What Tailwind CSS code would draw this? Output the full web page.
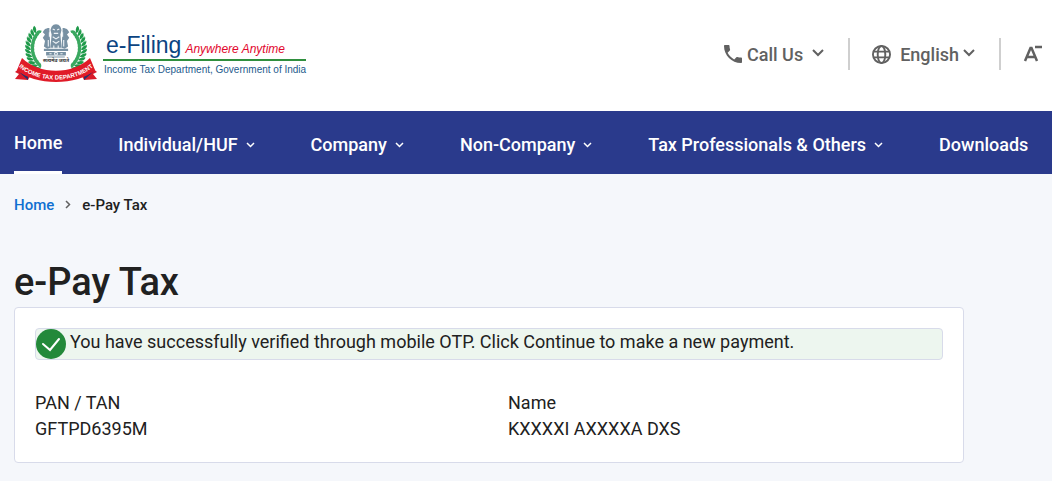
<!DOCTYPE html>
<html lang="en">
<head>
  <meta charset="UTF-8">
  <meta name="viewport" content="width=device-width, initial-scale=1.0">
  <title>e-Pay Tax - e-Filing</title>
  <script src="https://cdn.jsdelivr.net/npm/@tailwindcss/browser@4"></script>
</head>
<body class="min-h-screen overflow-x-hidden bg-[#f5f7fb] font-['Roboto',sans-serif] text-[#212121]">

  <!-- HEADER -->
  <header class="flex h-[111px] items-start justify-between bg-white pl-[14px] pr-[9px]">
    <a href="#" class="flex pt-6" aria-label="e-Filing home">
      <svg class="h-[60px] w-[84px]" viewBox="0 0 84 60" aria-hidden="true">
        <defs>
          <g id="leaf">
            <path d="M17 24c-4 0-6-2-6-5 3 0 5 2 6 5z" fill="#1f9a4a" />
            <path d="M17 24c-1-3 0-5 3-6 1 3 0 5-3 6z" fill="#3aa860" />
            <circle cx="12" cy="23.500" r=".7" fill="#8fcaa2" />
          </g>
          <g id="leaves">
            <use href="#leaf" />
            <use href="#leaf" transform="rotate(8 42 22)" />
            <use href="#leaf" transform="rotate(16 42 22)" />
            <use href="#leaf" transform="rotate(24 42 22)" />
            <use href="#leaf" transform="rotate(32 42 22)" />
            <use href="#leaf" transform="rotate(40 42 22)" />
            <use href="#leaf" transform="rotate(-8 42 22)" />
            <use href="#leaf" transform="rotate(-16 42 22)" />
            <use href="#leaf" transform="rotate(-24 42 22)" />
            <use href="#leaf" transform="rotate(-32 42 22)" />
            <use href="#leaf" transform="rotate(-40 42 22)" />
            <use href="#leaf" transform="rotate(-48 42 22)" />
          </g>
        </defs>
        <!-- wreath -->
        <use href="#leaves" transform="translate(0 2)" />
        <use href="#leaves" transform="translate(84 2) scale(-1 1)" />
        <!-- lion capital -->
        <g transform="translate(-4.200 -.5) scale(1.100)">
          <g fill="#7891a3">
            <path d="M38 3c2-3 6-3 8 0l1 3-1 4 1 12H37l1-12-1-4z" />
            <path d="M36 4c-4 0-5 2-6 4l2 2-2 3 2 3-1 5 3 2 3-1-1-15zM48 4c4 0 5 2 6 4l-2 2 2 3-2 3 1 5-3 2-3-1 1-15z" />
            <path d="M31 23h22v2H31zM33 26h18v3H33zM34 30h16v1H34z" />
          </g>
          <g fill="none" stroke="#eef3f7" stroke-width="1">
            <path d="M39 5l2 1M45 5l-2 1M40 9h4M39 12l3 2 3-2M39 16l3 2 3-2M36 8v4M48 8v4M35 15v6M49 15v6M40 20v3M44 20v3" />
            <circle cx="42" cy="27.500" r="1.300" />
            <path d="M36 27.500h2M46 27.500h2" />
          </g>
        </g>
        <text x="42" y="38" text-anchor="middle" font-family="Noto Sans, sans-serif" font-size="5" font-weight="700" fill="#333">सत्यमेव जयते</text>
        <!-- ribbon -->
        <path d="M8 42L1 48l4 2-4 5 13 1 2-4zM76 42l7 6-4 2 4 5-13 1-2-4z" fill="#d81b2a" />
        <path d="M5 48l9 4v4zM79 48l-9 4v4z" fill="#27336b" />
        <path d="M8 34C25 51 59 51 76 34l5 12C64 62 20 62 3 46z" fill="#e01b28" />
        <path id="ribbon" d="M4 42C22 60 62 60 80 42" fill="none" />
        <text font-family="Liberation Sans, sans-serif" font-size="6" font-weight="700" fill="#fff" text-anchor="middle"><textPath href="#ribbon" startOffset="50%">INCOME TAX DEPARTMENT</textPath></text>
      </svg>
      <div class="ml-[5px] pt-[9px] font-['Liberation_Sans',sans-serif]">
        <div class="flex items-baseline gap-1 border-b-2 border-[#2f8f3e] pb-0.5 pl-[3px]">
          <span class="text-[23px] leading-6 text-[#0b4482]">e-Filing</span>
          <span class="text-[12px] leading-none italic text-[#e2062c]">Anywhere Anytime</span>
        </div>
        <p class="pl-px text-[10px] leading-[18px] text-[#1c5a8c]">Income Tax Department, Government of India</p>
      </div>
    </a>

    <div class="flex items-center pt-[38px] text-[18px] font-medium text-[#616161]">
      <button type="button" class="flex items-center">
        <svg class="mr-[5px] size-[18px]" viewBox="3 3 18 18" fill="currentColor"><path d="M6.620 10.790c1.440 2.830 3.760 5.140 6.590 6.590l2.200-2.200c.27-.27.67-.36 1.020-.24 1.120.37 2.330.57 3.570.57.550 0 1 .45 1 1V20c0 .550-.45 1-1 1C10.610 21 3 13.390 3 4c0-.55.450-1 1-1h3.500c.55 0 1 .450 1 1 0 1.250.2 2.450.57 3.570.110.350.03.740-.25 1.020z" /></svg>
        Call Us
        <svg class="mb-0.5 ml-[9px] h-2 w-3" viewBox="0 0 12 8" fill="none" stroke="currentColor" stroke-width="2"><path d="M1 1l5 5 5-5" /></svg>
      </button>
      <span class="ml-6 mr-[22px] h-8 w-0.5 bg-[#cfcfcf]"></span>
      <button type="button" class="flex items-center">
        <svg class="mr-[9px] size-[19px]" viewBox="2 2 20 20" fill="none" stroke="currentColor" stroke-width="2"><circle cx="12" cy="12" r="9" /><ellipse cx="12" cy="12" rx="4" ry="9" /><path d="M4 9h16M4 15h16" /></svg>
        English
        <svg class="mb-0.5 ml-1 h-2 w-3" viewBox="0 0 12 8" fill="none" stroke="currentColor" stroke-width="2"><path d="M1 1l5 5 5-5" /></svg>
      </button>
      <span class="ml-6 mr-[22px] h-8 w-0.5 bg-[#cfcfcf]"></span>
      <button type="button" aria-label="Decrease text size">
        <svg class="h-[18px] w-5" viewBox="0 0 20 18" fill="none" stroke="currentColor" stroke-width="2.500"><path d="M2 16L7.500 3h1L14 16M4 12h8M12 2h7" /></svg>
      </button>
    </div>
  </header>

  <!-- NAVBAR -->
  <nav class="flex h-[63px] gap-14 whitespace-nowrap bg-[#2a3a8c] px-[14px] text-[18px] font-medium text-white">
    <a href="#" class="flex items-center border-b-[3px] border-white pt-[3px]">Home</a>
    <button type="button" class="flex items-center gap-2 pt-1">Individual/HUF
      <svg class="h-1.5 w-[9px]" viewBox="0 0 9 6" fill="none" stroke="currentColor" stroke-width="1.500"><path d="M1 1l3.500 3.500L8 1" /></svg></button>
    <button type="button" class="flex items-center gap-2 pt-1">Company
      <svg class="h-1.5 w-[9px]" viewBox="0 0 9 6" fill="none" stroke="currentColor" stroke-width="1.500"><path d="M1 1l3.500 3.500L8 1" /></svg></button>
    <button type="button" class="flex items-center gap-2 pt-1">Non-Company
      <svg class="h-1.5 w-[9px]" viewBox="0 0 9 6" fill="none" stroke="currentColor" stroke-width="1.500"><path d="M1 1l3.500 3.500L8 1" /></svg></button>
    <button type="button" class="flex items-center gap-2 pt-1">Tax Professionals &amp; Others
      <svg class="h-1.5 w-[9px]" viewBox="0 0 9 6" fill="none" stroke="currentColor" stroke-width="1.500"><path d="M1 1l3.500 3.500L8 1" /></svg></button>
    <a href="#" class="flex items-center pt-1">Downloads</a>
  </nav>

  <main class="pl-[14px] pr-[88px] pt-5">
    <div class="flex items-center text-[15px] leading-[22px] font-medium">
      <a href="#" class="text-[#0f6fd1]">Home</a>
      <svg class="mx-[11px] mb-0.5 h-[9px] w-1.5" viewBox="0 0 6 9" fill="none" stroke="#616161" stroke-width="1.500"><path d="M1 1l3.500 3.500L1 8" /></svg>
      <span>e-Pay Tax</span>
    </div>

    <h1 class="mt-[42px] text-[38px] leading-[49px] font-medium">e-Pay Tax</h1>

    <section class="rounded border border-[#d8dbea] bg-white p-5 text-[18px] leading-[26px]">
      <div class="flex h-8 rounded border border-[#d8dbea] bg-[#edf6ef]">
        <svg class="mr-1 size-[30px] shrink-0" viewBox="0 0 30 30" aria-hidden="true"><circle cx="15" cy="15" r="15" fill="#23893a" /><path d="M7 15l7 6 9-11" fill="none" stroke="#fff" stroke-width="2" stroke-linecap="round" /></svg>
        <p>You have successfully verified through mobile OTP. Click Continue to make a new payment.</p>
      </div>
      <dl class="mt-[30px] grid grid-cols-2 gap-x-[38px]">
        <div><dt>PAN / TAN</dt><dd>GFTPD6395M</dd></div>
        <div><dt>Name</dt><dd>KXXXXI AXXXXA DXS</dd></div>
      </dl>
    </section>
  </main>
</body>
</html>
